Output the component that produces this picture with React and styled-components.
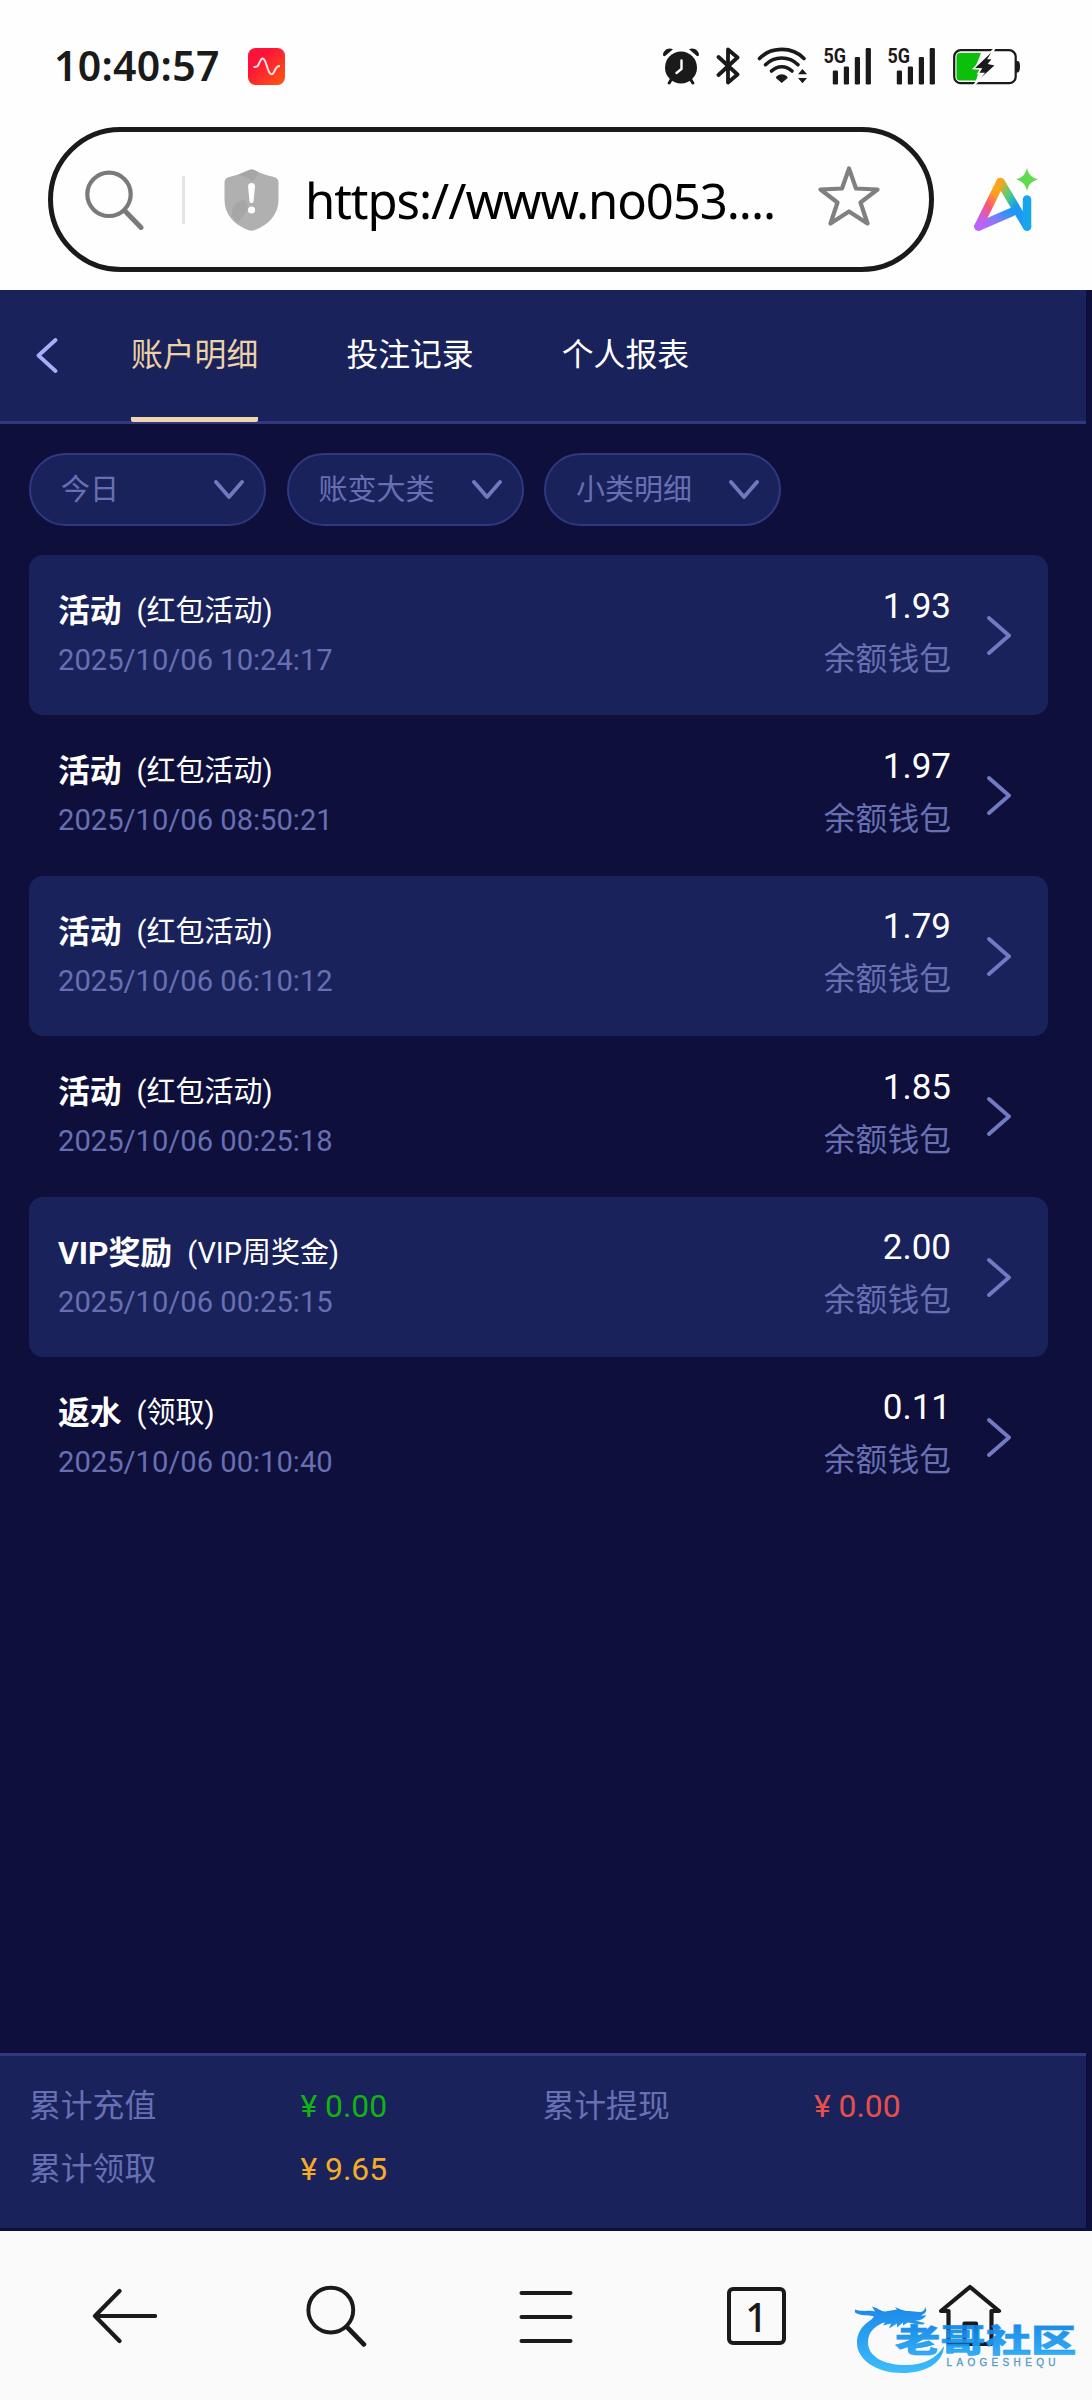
import React, { useState } from "react";
import styled, { createGlobalStyle } from "styled-components";

const GlobalStyle = createGlobalStyle`
    * {
        box-sizing: border-box;
    }

    body {
        margin: 0;
        background: #0e0f3b;
        font-family: Roboto, "Noto Sans CJK SC", sans-serif;
    }

    svg {
        display: block;
        flex: none;
    }
`;

const Screen = styled.div`
    position: relative;
    display: flex;
    flex-direction: column;
    width: 1092px;
    height: 2400px;
    overflow: hidden;
    background: #0e0f3b;
`;

const BrowserTop = styled.header`
    height: 290px;
    background: #fefefe;
`;

const StatusBar = styled.div`
    display: flex;
    align-items: center;
    height: 127px;
    padding: 5px 72px 0 54px;
    color: #1a1a1a;
`;

const Clock = styled.span`
    width: 194px;
    margin-top: -2px;
    font-family: "Noto Sans", sans-serif;
    font-size: 41px;
    font-weight: 600;
    line-height: 40px;
    letter-spacing: 0.3px;
    white-space: nowrap;
`;

const StatusIcons = styled.div`
    display: flex;
    align-items: flex-end;
    gap: 16px;
    margin: -8px 0 0 auto;

    svg:last-child {
        margin-left: 2px;
    }
`;

const AddressRow = styled.div`
    display: flex;
    align-items: center;
    padding-left: 48px;
`;

const AddressBar = styled.div`
    display: flex;
    align-items: center;
    width: 886px;
    height: 145px;
    padding: 0 49px 0 32px;
    margin-right: 40px;
    border: 5px solid #1a1a1a;
    border-radius: 73px;
`;

const AddressDivider = styled.div`
    width: 3px;
    height: 48px;
    margin: 0 39px 0 37px;
    background: #e4e4e4;
`;

const Url = styled.span`
    flex: 1;
    padding-left: 26px;
    color: #000;
    font-family: "Noto Sans", sans-serif;
    font-size: 49px;
    line-height: 60px;
    letter-spacing: -1.05px;
    white-space: nowrap;
`;

const StarButton = styled.div`
    padding-bottom: 8px;
`;

const TabBar = styled.nav`
    display: flex;
    width: 1086px;
    height: 134px;
    padding-left: 36px;
    background: #1a225b;
    border-bottom: 3px solid #2f3880;
`;

const BackButton = styled.div`
    width: 95px;
    padding-top: 48px;
`;

const Tab = styled.div`
    height: 132px;
    margin-right: 88.2px;
    color: ${props => (props.$active ? "#ecd2a4" : "#fff")};
    border-bottom: 5px solid ${props => (props.$active ? "#f0d6ac" : "transparent")};
    border-radius: 2px;
    font-size: 31.8px;
    line-height: 130px;
    cursor: pointer;
`;

const Filters = styled.div`
    display: flex;
    gap: 20.5px;
    padding: 29px 0 0 29px;
`;

const Filter = styled.div`
    display: flex;
    align-items: center;
    justify-content: space-between;
    width: 237px;
    height: 73px;
    padding: 0 20px 0 30px;
    border: 2.5px solid #2f3880;
    border-radius: 37px;
    background: #1a225b;
    color: #6870b4;
    font-size: 29px;
    line-height: 40px;
`;

const Records = styled.div`
    flex: 1;
    padding: 29px 44px 0 29px;
`;

const Record = styled.div`
    display: flex;
    height: 160.4px;
    padding: 0 37px 0 29px;
    border-radius: 14px;
    background: ${props => (props.$shaded ? "#1a225b" : "transparent")};
`;

const RecordInfo = styled.div`
    flex: 1;
    padding-top: 36px;
`;

const RecordTitle = styled.div`
    display: flex;
    color: #fff;
    font-size: 29px;
    line-height: 40px;
    white-space: nowrap;

    strong {
        margin-right: 15px;
        font-size: 31.8px;
        font-weight: 700;
    }
`;

const RecordDate = styled.div`
    margin-top: 9px;
    color: #6870b4;
    font-size: 29.15px;
    line-height: 40px;
`;

const RecordAmount = styled.div`
    padding-top: 31.5px;
    margin-right: 36px;
    text-align: right;
`;

const Amount = styled.div`
    color: #fff;
    font-size: 35px;
    line-height: 40px;
`;

const Wallet = styled.div`
    margin-top: 12px;
    color: #6870b4;
    font-size: 31.8px;
    line-height: 40px;
`;

const RecordArrow = styled.div`
    padding-top: 61px;
`;

const Totals = styled.div`
    display: grid;
    grid-template-columns: 271.5px 242px 271.5px 1fr;
    grid-auto-rows: 63px;
    width: 1086px;
    height: 175px;
    padding: 19px 0 0 29px;
    margin-bottom: 3px;
    background: #1a225b;
    border-top: 3px solid #2f3880;
    font-size: 31.8px;
    line-height: 63px;
`;

const TotalLabel = styled.span`
    color: #6870b4;
`;

const TotalValue = styled.span`
    color: ${props => props.$color};
`;

const BrowserNav = styled.footer`
    display: grid;
    grid-template-columns: repeat(5, 211px);
    place-items: center;
    height: 169px;
    padding: 0 19px 0 18px;
    background: #fafafa;

    svg:nth-child(2) {
        margin-left: 4px;
    }

    svg:last-child {
        margin-left: 5px;
    }
`;

const TabCount = styled.div`
    width: 59px;
    height: 58px;
    border: 4px solid #1a1a1a;
    border-radius: 6px;
    color: #1a1a1a;
    font-family: "Noto Sans", sans-serif;
    font-size: 39px;
    font-weight: 500;
    line-height: 52px;
    text-align: center;
`;

const Watermark = styled.div`
    position: absolute;
    left: 851px;
    top: 2300px;
    opacity: 0.93;
`;

const records = [
  { type: "活动", detail: "(红包活动)", date: "2025/10/06 10:24:17", amount: "1.93" },
  { type: "活动", detail: "(红包活动)", date: "2025/10/06 08:50:21", amount: "1.97" },
  { type: "活动", detail: "(红包活动)", date: "2025/10/06 06:10:12", amount: "1.79" },
  { type: "活动", detail: "(红包活动)", date: "2025/10/06 00:25:18", amount: "1.85" },
  { type: "VIP奖励", detail: "(VIP周奖金)", date: "2025/10/06 00:25:15", amount: "2.00" },
  { type: "返水", detail: "(领取)", date: "2025/10/06 00:10:40", amount: "0.11" }
];

const totals = [
  { label: "累计充值", value: "¥ 0.00", color: "#12b312" },
  { label: "累计提现", value: "¥ 0.00", color: "#e84f4a" },
  { label: "累计领取", value: "¥ 9.65", color: "#f5ac26" }
];

const PulseIcon = () => (
  <svg width="37" height="37" viewBox="0 0 37 37">
    <defs>
      <linearGradient id="pulse" x1="0" y1="0" x2="1" y2="1">
        <stop offset="0.3" stopColor="#fd1238" />
        <stop offset="1" stopColor="#fd5a10" />
      </linearGradient>
    </defs>
    <rect width="37" height="37" rx="7.5" fill="url(#pulse)" />
    <path
      d="M5.5 19c3.5 0 4.5-.5 5.8-4 1.2-3.2 1.9-4.5 3.4-4.5 4 0 4.3 15.8 8.8 15.8 3.8 0 2.5-8.3 8.500-8.300"
      fill="none"
      stroke="#ffe6e6"
      strokeWidth="2"
    />
  </svg>
);

const AlarmIcon = () => (
  <svg width="38" height="38" viewBox="0 0 38 38">
    <g stroke="#1a1a1a" strokeWidth="3" strokeLinecap="round">
      <path d="M9.5 32l-2.3 4M28.5 32l2.3 4" />
    </g>
    <path d="M1 8.5C.5 3.5 6.5-.5 11 2.3L2.8 9.3zM37 8.5c.5-5-5.5-9-10-6.2l8.2 7z" fill="#1a1a1a" />
    <circle cx="19" cy="20.5" r="16" fill="#1a1a1a" />
    <path d="M19.5 13.5v8.5l-5 4" fill="none" stroke="#fff" strokeWidth="2.4" strokeLinecap="round" />
  </svg>
);

const BluetoothIcon = () => (
  <svg width="25" height="38" viewBox="0 0 25 38">
    <path
      d="M2.5 10l19 17.5-9.5 8V2.5l9.5 8-19 17.5"
      fill="none"
      stroke="#1a1a1a"
      strokeWidth="3.8"
      strokeLinejoin="round"
      strokeLinecap="round"
    />
  </svg>
);

const WifiIcon = () => (
  <svg width="50" height="38" viewBox="0 0 50 38">
    <g fill="none" stroke="#1a1a1a" strokeWidth="3.6" strokeLinecap="round">
      <path d="M2.5 11.500C14-.7 35.5-.7 47 11.500" />
      <path d="M8.5 17.7c9-9 23.500-9 32.500 0" />
      <path d="M14.5 24c6-5.700 14.500-5.700 20.500 0" />
    </g>
    <path d="M19.5 29.5c3.300-3 7.200-3 10.500 0 .8.8.6 1.500 0 2.100L24.700 36l-5.200-4.400c-.6-.6-.8-1.300 0-2.100z" fill="#1a1a1a" />
    <path d="M41 27.300L45.500 22l4.500 5.300zM41 31h9l-4.500 5.300z" fill="#1a1a1a" />
  </svg>
);

const SignalIcon = () => (
  <svg width="48" height="46" viewBox="0 -8 48 46">
    <text
      x="0.5"
      y="15.5"
      fontFamily="Roboto, sans-serif"
      fontSize="21"
      fontWeight="700"
      fill="#1a1a1a"
      textLength="22.5"
      lengthAdjust="spacingAndGlyphs"
    >
      5G
    </text>
    <g fill="#1a1a1a">
      <rect x="9.8" y="23.5" width="5.2" height="14" rx="1.2" />
      <rect x="20.8" y="19.5" width="5.2" height="18" rx="1.2" />
      <rect x="31.8" y="10" width="5.2" height="27.5" rx="1.2" />
      <rect x="42.7" y="1" width="5.2" height="36.5" rx="1.2" />
    </g>
  </svg>
);

const BatteryIcon = () => (
  <svg width="67" height="38" viewBox="0 0 67 38">
    <rect x="1.2" y="3.2" width="61.5" height="33" rx="6.5" fill="none" stroke="#1a1a1a" strokeWidth="2.2" />
    <path d="M63 14h1.500c1.500 0 2.500 1.500 2.500 5.500s-1 6-2.500 6H63z" fill="#1a1a1a" />
    <path d="M7 6h21l-6 15h5l-4 12.500H7A3.500 3.500 0 0 1 3.500 30V9.500A3.500 3.500 0 0 1 7 6z" fill="#0bbf0b" />
    <path d="M42 1L20.500 21.500l7.500.5-3 4.500h5.500L20.500 38.500 43 18l-7-1.500 4-5h-4.500z" fill="#1a1a1a" stroke="#fff" strokeWidth="1.5" />
  </svg>
);

const SearchIcon = ({ size = 60, color, width }) => (
  <svg width={size} height={size} viewBox="0 0 60 60" fill="none" stroke={color} strokeLinecap="round">
    <circle cx="24" cy="24.3" r="21.7" strokeWidth={width} />
    <path d="M39.5 40.5L56 57.5" strokeWidth={width + 0.8} />
  </svg>
);

const ShieldIcon = () => (
  <svg width="55" height="62" viewBox="0 0 55 62">
    <path d="M24.5 1.2q3-1.500 6 0C37 4.500 43 6.500 50 8q4.500 1.200 4.500 5.500v17c0 15-9.500 25-23.500 30.500q-3.500 1.400-7 0C10 55.500.5 45.500.5 30.500v-17Q.5 9.200 5 8C12 6.500 18 4.500 24.500 1.200z" fill="#b0b0b0" />
    <path d="M14 5.700l10.500-4.500q3-1.500 6 0l4 2-5.500 9C24 9 19 7 14 5.700zM8 47c-1-8 4-16 13-16l4 8-11 14.500C11.500 51.500 9.500 49.500 8 47z" fill="#a6a6a6" />
    <path d="M24 17c0-4 7-4 7 0l-1.500 15.500c-.3 2-3.700 2-4 0z" fill="#fff" />
    <circle cx="27.5" cy="41" r="3.6" fill="#fff" />
  </svg>
);

const StarIcon = () => (
  <svg width="62" height="60" viewBox="0 0 62 60">
    <path
      d="M31 2.5L38 22.5 59.5 23.5 42.5 36.5 49.5 57.5 31 45.5 12.5 57.5 19.5 36.5 2.5 23.5 24 22.5z"
      fill="none"
      stroke="#808080"
      strokeWidth="4.2"
      strokeLinejoin="round"
    />
  </svg>
);

const AiIcon = () => (
  <svg width="64" height="64" viewBox="0 0 64 64">
    <defs>
      <linearGradient id="stemLeft" x1="0.55" y1="0" x2="0" y2="1">
        <stop offset="0.1" stopColor="#ffa31a" />
        <stop offset="0.45" stopColor="#fb5577" />
        <stop offset="0.9" stopColor="#b963fb" />
      </linearGradient>
      <linearGradient id="stemRight" x1="0" y1="0" x2="1" y2="1">
        <stop offset="0" stopColor="#ffa31a" />
        <stop offset="0.3" stopColor="#4fd07c" />
        <stop offset="0.55" stopColor="#1b97f5" />
        <stop offset="1" stopColor="#2196ff" />
      </linearGradient>
      <linearGradient id="crossbar" x1="0" y1="1" x2="1" y2="0">
        <stop offset="0" stopColor="#c061fb" />
        <stop offset="0.5" stopColor="#857af8" />
        <stop offset="1" stopColor="#1b97f5" />
      </linearGradient>
    </defs>
    <g fill="none" strokeWidth="8.5" strokeLinecap="round" strokeLinejoin="round">
      <path d="M4.5 58.5L38 44" stroke="url(#crossbar)" />
      <path d="M4.5 58.5L26.5 14" stroke="url(#stemLeft)" />
      <path d="M26.5 14L53 58.5" stroke="url(#stemRight)" />
      <path d="M53 31.5v27" stroke="#17a5ec" />
    </g>
    <path d="M53 0c2 7 4 9 11 11.500-7 2-9 4.500-11 11.500-2-7-4-9.500-11-11.500 7-2.500 9-4.500 11-11.500z" fill="#5fdb4f" />
  </svg>
);

const ChevronIcon = ({ w, h, points, color }) => (
  <svg width={w} height={h} viewBox={`0 0 ${w} ${h}`}>
    <polyline
      points={points}
      fill="none"
      stroke={color}
      strokeWidth="3.8"
      strokeLinecap="round"
      strokeLinejoin="round"
    />
  </svg>
);

const ArrowLeftIcon = () => (
  <svg width="66" height="56" viewBox="0 0 66 56" fill="none" stroke="#1a1a1a" strokeWidth="4.2" strokeLinecap="round" strokeLinejoin="round">
    <path d="M28.5 3L4 28l24.500 25M4 28h60" />
  </svg>
);

const MenuIcon = () => (
  <svg width="54" height="56" viewBox="0 0 54 56" fill="none" stroke="#1a1a1a" strokeWidth="4" strokeLinecap="round">
    <path d="M2.5 5h49M2.5 29h49M2.5 53h49" />
  </svg>
);

const HomeIcon = () => (
  <svg width="64" height="63" viewBox="0 0 64 63" fill="none" stroke="#1a1a1a" strokeWidth="4.2" strokeLinejoin="round">
    <path d="M10.5 27H3L32 3l29 24h-7.500v33h-43z" />
    <path d="M26.5 60V39.500h11.500V60" />
  </svg>
);

const DragonLogo = () => (
  <svg width="240" height="84" viewBox="0 0 240 84">
    <defs>
      <linearGradient id="logoBlue" gradientUnits="userSpaceOnUse" x1="0" y1="8" x2="0" y2="72">
        <stop offset="0" stopColor="#0c82e8" />
        <stop offset="1" stopColor="#2fb8fa" />
      </linearGradient>
      <linearGradient id="logoText" x1="0" y1="0" x2="0" y2="1">
        <stop offset="0.2" stopColor="#0c83e6" />
        <stop offset="0.9" stopColor="#22abf7" />
      </linearGradient>
    </defs>
    <g fill="url(#logoBlue)">
      <path d="M38 14C18 17 6 28 6 43c0 17 20 30 45 30 24 0 41-10 42-27-7 12-20 19-38 19-22 0-38-8-38-23 0-11 9-19 24-22z" />
      <path d="M4 9.500c7 2.500 12 .5 20 2l-3-5c6 1.500 8 4.500 13 5l12-2-2-2.500c5 2 8 4 14 4l10 1c4 0 6-1.500 6-5 3 4 0 7-4 8.500 3 0 4 0 5-1-1 4-5 6-11 6l10 2.500-2 1.500c-6 0-10-1-15-2l-5 3v-3l-6 5v-4l-8 5 2-5-8 2 2-3-9 1 4-4-11 3 5-6c-6-2-13 0-19-4z" />
    </g>
    <g transform="translate(44 51.5) scale(1.44 1)">
      <text
        fontFamily="'Noto Sans CJK SC', sans-serif"
        fontSize="31.5"
        fontWeight="900"
        fill="url(#logoText)"
        stroke="#158fee"
        strokeWidth="0.5"
      >
        老哥社区
      </text>
    </g>
    <text
      x="95.5"
      y="66"
      fontFamily="'Liberation Sans', sans-serif"
      fontSize="10"
      fill="#4b93bf"
      stroke="#4b93bf"
      strokeWidth="0.3"
      textLength="109"
    >
      LAOGESHEQU
    </text>
  </svg>
);

function App() {
  const [activeTab, setActiveTab] = useState("账户明细");

  return (
    <Screen>
      <GlobalStyle />
      <BrowserTop>
        <StatusBar>
          <Clock>10:40:57</Clock>
          <PulseIcon />
          <StatusIcons>
            <AlarmIcon />
            <BluetoothIcon />
            <WifiIcon />
            <SignalIcon />
            <SignalIcon />
            <BatteryIcon />
          </StatusIcons>
        </StatusBar>
        <AddressRow>
          <AddressBar>
            <SearchIcon color="#7a7a7a" width={4.2} />
            <AddressDivider />
            <ShieldIcon />
            <Url>https://www.no053....</Url>
            <StarButton>
              <StarIcon />
            </StarButton>
          </AddressBar>
          <AiIcon />
        </AddressRow>
      </BrowserTop>

      <TabBar>
        <BackButton>
          <ChevronIcon w={22} h={35} points="19.5,2 2.5,17.5 19.5,33" color="#a9aef8" />
        </BackButton>
        {["账户明细", "投注记录", "个人报表"].map(name => (
          <Tab key={name} $active={name === activeTab} onClick={() => setActiveTab(name)}>
            {name}
          </Tab>
        ))}
      </TabBar>

      <Filters>
        {["今日", "账变大类", "小类明细"].map(name => (
          <Filter key={name}>
            {name}
            <ChevronIcon w={30} h={19} points="2,2 15,17 28,2" color="#717abf" />
          </Filter>
        ))}
      </Filters>

      <Records>
        {records.map((record, index) => (
          <Record key={record.date} $shaded={index % 2 === 0}>
            <RecordInfo>
              <RecordTitle>
                <strong>{record.type}</strong>
                {record.detail}
              </RecordTitle>
              <RecordDate>{record.date}</RecordDate>
            </RecordInfo>
            <RecordAmount>
              <Amount>{record.amount}</Amount>
              <Wallet>余额钱包</Wallet>
            </RecordAmount>
            <RecordArrow>
              <ChevronIcon w={24} h={39} points="2,2 22,19.5 2,37" color="#727ac4" />
            </RecordArrow>
          </Record>
        ))}
      </Records>

      <Totals>
        {totals.map(total => (
          <React.Fragment key={total.label}>
            <TotalLabel>{total.label}</TotalLabel>
            <TotalValue $color={total.color}>{total.value}</TotalValue>
          </React.Fragment>
        ))}
      </Totals>

      <BrowserNav>
        <ArrowLeftIcon />
        <SearchIcon size={62} color="#1a1a1a" width={3.8} />
        <MenuIcon />
        <TabCount>1</TabCount>
        <HomeIcon />
      </BrowserNav>

      <Watermark>
        <DragonLogo />
      </Watermark>
    </Screen>
  );
}

export default App;
